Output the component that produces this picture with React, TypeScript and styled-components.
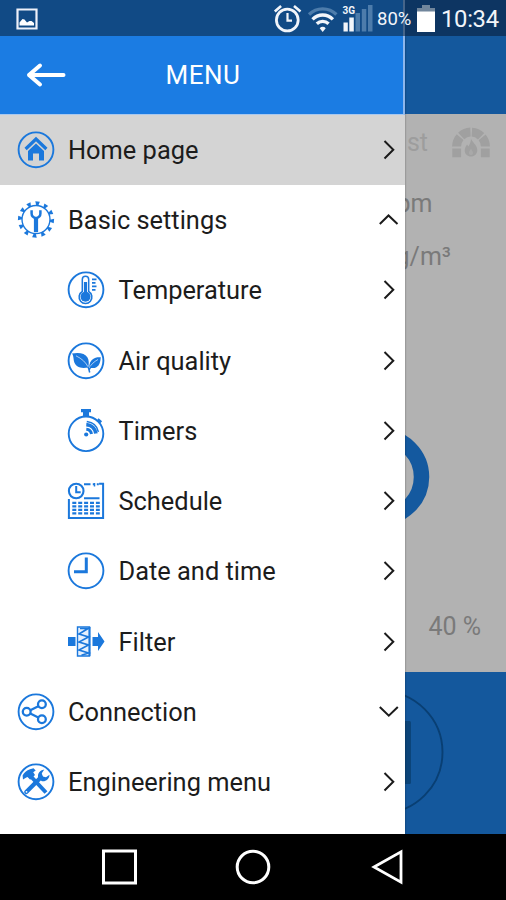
import React from 'react';
import styled, { createGlobalStyle } from 'styled-components';

const BLUE = '#1b78dc';

const GlobalStyle = createGlobalStyle`
  * { box-sizing: border-box; }
  body { margin: 0; background: #000; font-family: Roboto, "Liberation Sans", sans-serif; }
  svg { display: block; flex: none; }
`;

const Screen = styled.div`
  width: 506px;
  height: 900px;
  display: flex;
  flex-direction: column;
  overflow: hidden;
`;

const StatusBar = styled.header`
  height: 36px;
  flex: none;
  display: flex;
  align-items: center;
  padding: 2px 0 0 16px;
  color: #f2f5fa;
  background: linear-gradient(90deg, #114a85 0 403px, #46658a 403px 405px, #0d3562 405px);
`;

const StatusIcons = styled.div`
  display: flex;
  align-items: center;
  margin-left: 235px;
`;

const StatusText = styled.span<{ $size: number; $width: number }>`
  width: ${(p) => p.$width}px;
  font-size: ${(p) => p.$size}px;
  line-height: 34px;
  white-space: nowrap;
`;

const ClockText = styled(StatusText)`
  padding-left: 2px;
  letter-spacing: -0.3px;
`;

const Body = styled.div`
  height: 797.5px;
  flex: none;
  display: flex;
  overflow: hidden;
`;

const Drawer = styled.aside`
  width: 405px;
  flex: none;
  display: flex;
  flex-direction: column;
  background: #fff;
  box-shadow: 0 0 2px rgba(0, 0, 0, 0.4);
  z-index: 1;
`;

const DrawerHeader = styled.div`
  height: 78.5px;
  flex: none;
  display: flex;
  align-items: center;
  padding-left: 26px;
  background: #1b7ce3;
  color: #fff;
  border-right: 2px solid #8db6ec;
  border-bottom: 1px solid #a9c8ee;
`;

const DrawerTitle = styled.h1`
  margin: 1px 0 0 99.5px;
  font-size: 26px;
  font-weight: 400;
  line-height: 34px;
  letter-spacing: 0.5px;
`;

const MenuRow = styled.div<{ $active?: boolean; $nested?: boolean }>`
  height: 70.3px;
  flex: none;
  display: flex;
  align-items: center;
  padding: 0 6px 0 ${(p) => (p.$nested ? 64 : 13.5)}px;
  background: ${(p) => (p.$active ? '#d4d4d4' : '#fff')};
`;

const MenuLabel = styled.span`
  flex: 1;
  margin-left: 10.5px;
  font-size: 25.4px;
  line-height: 32px;
  color: #1c1c1c;
  white-space: nowrap;
`;

const Page = styled.main`
  flex: 1;
  min-width: 0;
  display: flex;
  flex-direction: column;
  background: #b2b2b2;
  color: #7a7a7a;
  overflow: hidden;
`;

const PageHeader = styled.div`
  height: 78px;
  flex: none;
  background: #14589d;
`;

const ModeRow = styled.div`
  height: 56px;
  flex: none;
  display: flex;
  align-items: center;
  justify-content: space-between;
  padding-right: 16px;
  color: #9d9d9d;
`;

const Reading = styled.div<{ $width: number; $height: number }>`
  width: ${(p) => p.$width}px;
  height: ${(p) => p.$height}px;
  flex: none;
  display: flex;
  align-items: center;
  justify-content: flex-end;
  font-size: 25px;
  white-space: nowrap;
`;

const Gauge = styled.div`
  height: 321px;
  flex: none;
  padding-top: 152px;
`;

const PageFooter = styled.div`
  flex: 1;
  margin-top: 16px;
  padding-top: 18px;
  background: #14589d;
`;

const NavBar = styled.nav`
  flex: 1;
  display: flex;
  justify-content: center;
  align-items: center;
  gap: 94px;
  background: #000;
`;

const Ring = () => <circle cx="22" cy="21.8" r="17.4" fill="none" stroke={BLUE} strokeWidth="1.9" />;

const Icon = ({ children }: { children: React.ReactNode }) => (
  <svg width="44" height="44" viewBox="0 0 44 44">{children}</svg>
);

const HomeIcon = () => (
  <Icon>
    <Ring />
    <path d="M11.6 21 22 11l10.400 10" fill="none" stroke={BLUE} strokeWidth="3.200" />
    <path d="M14 23 22 15.500l8 7.500v9.500h-5v-7h-6v7h-5z" fill={BLUE} />
  </Icon>
);

const TEETH = Array.from({ length: 12 }, (_, i) => i * 30 + 5);

const SettingsIcon = () => (
  <Icon>
    <circle cx="22" cy="21.500" r="14" fill="none" stroke={BLUE} strokeWidth="1.400" />
    {TEETH.map((a) => (
      <path key={a} d="M21 7.500 19.700 3.500h4.600L23 7.500z" fill={BLUE} transform={`rotate(${a} 22 21.500)`} />
    ))}
    <path d="M17.600 12.300v3.200c0 2.500 1.500 4 4.400 4.800 2.900-.8 4.400-2.300 4.400-4.800v-3.200" fill="none" stroke={BLUE} strokeWidth="2.500" />
    <path d="M22 19v15" stroke={BLUE} strokeWidth="4.200" />
  </Icon>
);

const TemperatureIcon = () => (
  <Icon>
    <Ring />
    <path d="M18.300 23.500V11.500a3.200 3.200 0 0 1 6.400 0v12a6.400 6.400 0 1 1-6.400 0z" fill="#fff" stroke={BLUE} strokeWidth="1.500" />
    <circle cx="21.500" cy="28.700" r="5" fill={BLUE} />
    <path d="M21.500 14v14" stroke={BLUE} strokeWidth="3.200" />
    <path d="M28 11.300h4.500M28 14.800h3.500M28 18.300h4.500M28 21.800h3.500" stroke={BLUE} strokeWidth="1.700" />
  </Icon>
);

const LeafIcon = () => (
  <Icon>
    <Ring />
    <path d="M8 14.600c6.800-1.300 13-.4 15.500 4 1.600 2.900 1.500 6.500.8 9.900-7 1.300-13 .2-14.500-6.900-.4-2.800-.4-5-1.800-7z" fill={BLUE} />
    <path d="M36.800 18.200c-6-.4-11 1.500-11.800 10.200 7 2.200 11.200-1 11.800-10.200z" fill={BLUE} />
    <path d="M12 16.800c6 3 10 6.500 12.500 12M34 20.500c-4 2.200-7 5-8.800 8.500" fill="none" stroke="#cfe3fa" strokeWidth=".8" />
    <path d="M23.800 27.500c.9 1.800 1.500 3.700 1.900 6M27 27.500l-1.900 3.500" fill="none" stroke={BLUE} strokeWidth="1.500" />
  </Icon>
);

const TimerIcon = () => (
  <Icon>
    <circle cx="22" cy="24.800" r="17.300" fill="none" stroke={BLUE} strokeWidth="1.900" />
    <path d="M17 0h10v3.300h-2V7h-6V3.300h-2z" fill={BLUE} />
    <path d="m33.500 10.500 3.500 3" stroke={BLUE} strokeWidth="3.300" />
    <circle cx="22.200" cy="25.500" r="2.100" fill={BLUE} />
    <path d="M22.300 20.300c2.800.2 4.700 1.900 5.200 4.800" fill="none" stroke={BLUE} strokeWidth="3" />
    <path d="M22.300 15.700c5.200.3 8.800 3.800 9.600 8.800" fill="none" stroke={BLUE} strokeWidth="3.800" />
    <path d="M22.800 12.400c6 .8 10.400 4.500 11.600 10.400" fill="none" stroke={BLUE} strokeWidth="1.500" />
  </Icon>
);

const ScheduleIcon = () => (
  <Icon>
    <path d="M4.900 20V39h34.200V4.800h-4M20 5.300h6.500M28.800 5.300h1.500M32.800 5.300h2M20 19.200h15.500" fill="none" stroke={BLUE} strokeWidth="2" />
    <path d="M30.500 4v3.500" stroke={BLUE} strokeWidth="1.500" />
    <circle cx="12.200" cy="12" r="7.300" fill="none" stroke={BLUE} strokeWidth="2.100" />
    <path d="M12.200 7v6.200h4.500" fill="none" stroke={BLUE} strokeWidth="2" />
    {[23.800, 27.300, 30.800, 34.300].map((y) => (
      <path key={y} d={`M8.300 ${y}h27.500`} stroke={BLUE} strokeWidth="2.200" strokeDasharray="4 1.900" />
    ))}
  </Icon>
);

const ClockIcon = () => (
  <Icon>
    <Ring />
    <path d="M22.300 8.500V22.800H10" fill="none" stroke={BLUE} strokeWidth="3" />
  </Icon>
);

const FilterIcon = () => (
  <Icon>
    <path d="M4 17h7.500v9H4zM28.500 17H34v-5l6.500 9.500L34 31v-5h-5.500z" fill={BLUE} />
    <path d="M13.500 7h12v29h-12z" fill="#e7f1fd" stroke={BLUE} strokeWidth="1.400" />
    <path d="M16 8.500h8l-9 5.500 9.500 3-9.500 5 9.500 3-9.500 5 9.500 3-7 2.300" fill="none" stroke={BLUE} strokeWidth="1.700" />
    <path d="M25.500 7v29" stroke={BLUE} strokeWidth="2" />
  </Icon>
);

const ShareIcon = () => (
  <Icon>
    <Ring />
    <g fill="none" stroke={BLUE} strokeWidth="2.300">
      <circle cx="12.700" cy="21.800" r="3.900" />
      <circle cx="27.900" cy="14.300" r="3.900" />
      <circle cx="27.900" cy="29.300" r="3.900" />
      <path d="m16.300 20.200 8-4M16.300 23.500l8 4" />
    </g>
  </Icon>
);

const ToolsIcon = () => (
  <Icon>
    <Ring />
    <path d="M12.300 32 27 17.300" stroke={BLUE} strokeWidth="4.300" strokeLinecap="round" />
    <path d="M30.300 9.500c-4.800.8-7.200 4.500-6 8.300l3.200 3.200c3.900 1 7.800-1.700 8-6.300l-3.500 2.600-3.300-.9-.9-3.200z" fill={BLUE} />
    <path d="m16 15.500 16 17" stroke={BLUE} strokeWidth="4" />
    <path d="M9 19.500 8.600 15.500c1.400-3 4-5 7.400-6.300l3.500-.9 2.200 2.200-2.500 1.700 1.800 2.800-4.800 4.800-2.700-2.800-1.200.4z" fill={BLUE} />
    <circle cx="12.500" cy="31.800" r=".9" fill="#fff" />
  </Icon>
);

const CHEVRONS = {
  right: 'm5.500 3 8.800 8.700-8.800 8.800',
  up: 'm.8 16 8.700-8.500L18.500 16',
  down: 'm.8 7 9 8.700L18.800 7',
};

const Chevron = ({ dir }: { dir: keyof typeof CHEVRONS }) => (
  <svg width="20" height="24" viewBox="0 0 20 24">
    <path d={CHEVRONS[dir]} fill="none" stroke="#1b1b1b" strokeWidth="2" />
  </svg>
);

type Item = { label: string; icon: () => React.ReactElement; dir: keyof typeof CHEVRONS; nested?: boolean; active?: boolean };

const ITEMS: Item[] = [
  { label: 'Home page', icon: HomeIcon, dir: 'right', active: true },
  { label: 'Basic settings', icon: SettingsIcon, dir: 'up' },
  { label: 'Temperature', icon: TemperatureIcon, dir: 'right', nested: true },
  { label: 'Air quality', icon: LeafIcon, dir: 'right', nested: true },
  { label: 'Timers', icon: TimerIcon, dir: 'right', nested: true },
  { label: 'Schedule', icon: ScheduleIcon, dir: 'right', nested: true },
  { label: 'Date and time', icon: ClockIcon, dir: 'right', nested: true },
  { label: 'Filter', icon: FilterIcon, dir: 'right', nested: true },
  { label: 'Connection', icon: ShareIcon, dir: 'down' },
  { label: 'Engineering menu', icon: ToolsIcon, dir: 'right' },
];

const PictureIcon = () => (
  <svg width="22" height="22" viewBox="0 0 22 22">
    <path d="M1.500 1.500h19v19h-19z" fill="none" stroke="#eef1fa" strokeWidth="2.200" />
    <path d="M3.500 17.500v-3l3-3.500 2 .5 2.500 3 2.500-1.500h2l2.500 2v2.500z" fill="#fff" />
  </svg>
);

const SignalCluster = () => (
  <svg width="104" height="30" viewBox="273 4 104 30">
    <g fill="none" stroke="#f2f5fa">
      <circle cx="287.300" cy="20" r="10.900" strokeWidth="2.800" />
      <path d="M287.500 13v7.700h4.500" strokeWidth="2.200" />
      <path d="m274.800 11.500 6.300-5.500M300.500 11.500 294 6" strokeWidth="2.600" />
    </g>
    <g fill="none" strokeWidth="3.300">
      <path d="M309 14.500a19.500 19.500 0 0 1 27.400 0" stroke="#4d7cab" />
      <path d="M312.500 19.300a14.300 14.300 0 0 1 20.400 0M316.800 23.800a8.500 8.500 0 0 1 11.800 0" stroke="#f2f5fa" />
    </g>
    <path d="m322.700 32-3-3.800a4 4 0 0 1 6 0z" fill="#f2f5fa" />
    <path d="M343.500 22.500h4.300v9h-4.300zM349.300 17.500h4.500v14h-4.500z" fill="#f2f5fa" />
    <path d="M355.500 13h4.500v18.500h-4.500zM361.800 9h4.500v22.500h-4.500zM368 5h4.500v26.500H368z" fill="#4d7cab" />
    <text x="342.500" y="13.800" fontSize="10" fontWeight="700" fill="#f2f5fa" textLength="12.500">3G</text>
  </svg>
);

const BatteryIcon = () => (
  <svg width="26" height="30" viewBox="413 4 26 30">
    <path d="M422 5h8v3h5v4h-18V8h5z" fill="#71869c" />
    <path d="M417 11.500h18V32h-18z" fill="#fff" />
  </svg>
);

const FireplaceIcon = () => (
  <svg width="38" height="34" viewBox="0 0 38 34">
    <path d="M4.600 21.500A14.400 14.400 0 0 1 33.400 21.500" fill="none" stroke="#a0a0a0" strokeWidth="9" strokeDasharray="10.200 1.500" />
    <path d="M.3 23.500h8.800v8.800H.3zM28.900 23.500h8.800v8.800h-8.800z" fill="#a0a0a0" />
    <path d="M19 13.500c.8 3.500 6.300 6.500 6.300 11.500 0 4-2.800 6.500-6.300 6.500s-6.300-2.500-6.300-6c0-2.500 1.300-4.500 2.300-6l1.500 2c1-2.500 2.500-4.500 2.500-8z" fill="#a0a0a0" />
    <path d="M19 24c1.500 2 2 2.800 2 4a2 2 0 0 1-4 0c0-1.200.8-2.500 2-4z" fill="#a9a9a9" />
  </svg>
);

export default function App() {
  return (
    <Screen>
      <GlobalStyle />
      <StatusBar>
        <PictureIcon />
        <StatusIcons>
          <SignalCluster />
          <StatusText $size={18.500} $width={36}>80%</StatusText>
          <BatteryIcon />
          <ClockText $size={23.800} $width={62}>10:34</ClockText>
        </StatusIcons>
      </StatusBar>
      <Body>
        <Drawer>
          <DrawerHeader>
            <svg width="40" height="26" viewBox="0 0 40 26">
              <path d="M37.500 13H3M14 3.500 3 13l11 9.500" fill="none" stroke="#fff" strokeWidth="4" strokeLinecap="round" strokeLinejoin="round" />
            </svg>
            <DrawerTitle>MENU</DrawerTitle>
          </DrawerHeader>
          {ITEMS.map(({ label, icon: ItemIcon, dir, nested, active }) => (
            <MenuRow key={label} $active={active} $nested={nested}>
              <ItemIcon />
              <MenuLabel>{label}</MenuLabel>
              <Chevron dir={dir} />
            </MenuRow>
          ))}
        </Drawer>
        <Page>
          <PageHeader />
          <ModeRow>
            <Reading $width={23} $height={56}>st</Reading>
            <FireplaceIcon />
          </ModeRow>
          <Reading $width={27.500} $height={67}>pm</Reading>
          <Reading $width={46} $height={38}>g/m³</Reading>
          <Gauge>
            <svg width="25" height="100" viewBox="405 427 25 100">
              <circle cx="381" cy="477" r="40.500" fill="none" stroke="#14599f" strokeWidth="15.500" />
            </svg>
          </Gauge>
          <Reading $width={76} $height={60}>40 %</Reading>
          <PageFooter>
            <svg width="40" height="126" viewBox="405 690 40 126">
              <circle cx="381.500" cy="752.300" r="61" fill="none" stroke="#093f73" strokeWidth="1.900" />
              <path d="M404 721h5.500a1.500 1.500 0 0 1 1.500 1.500v60a1.500 1.500 0 0 1-1.500 1.500H404z" fill="#0b4479" />
            </svg>
          </PageFooter>
        </Page>
      </Body>
      <NavBar>
        <svg width="40" height="40" viewBox="0 0 40 40"><path d="M4.500 4h32v32h-32z" fill="none" stroke="#fff" strokeWidth="3" /></svg>
        <svg width="40" height="40" viewBox="0 0 40 40"><circle cx="20" cy="20" r="15.800" fill="none" stroke="#fff" strokeWidth="3" /></svg>
        <svg width="40" height="40" viewBox="0 0 40 40"><path d="M7 20 34 4.800v30.400z" fill="none" stroke="#fff" strokeWidth="2.800" /></svg>
      </NavBar>
    </Screen>
  );
}
